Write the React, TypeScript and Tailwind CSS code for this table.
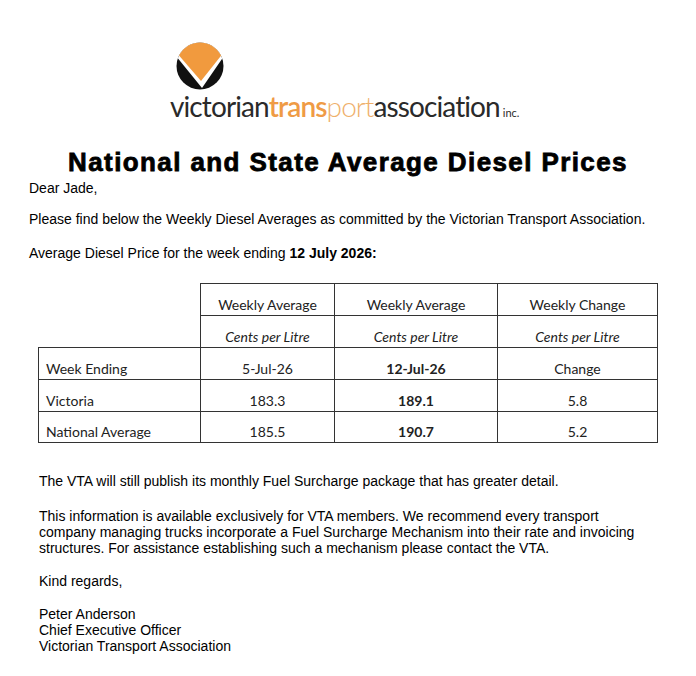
import React from 'react';

function VtaMark() {
  return (
    <svg width="48" height="48" viewBox="0 0 48 48">
      <defs>
        <clipPath id="vta-circle">
          <circle cx="24" cy="24" r="23.5" />
        </clipPath>
      </defs>
      <circle cx="24" cy="24" r="23.5" fill="#111111" />
      <g clipPath="url(#vta-circle)">
        <polygon points="0,0 48,0 48,14 26,46 0,14" fill="#ffffff" />
        <polygon points="0,0 48,0 48,10 25,39 0,10" fill="#f19a3e" />
      </g>
    </svg>
  );
}

const rows = [
  { label: 'Week Ending', prev: '5-Jul-26', cur: '12-Jul-26', change: 'Change' },
  { label: 'Victoria', prev: '183.3', cur: '189.1', change: '5.8' },
  { label: 'National Average', prev: '185.5', cur: '190.7', change: '5.2' },
];

const cell = 'border-l border-t border-[#333] h-[32px] flex items-end pb-[2px] leading-[16px]';

export default function App() {
  return (
    <div className="w-[696px] h-[676px] bg-white text-black font-['Liberation_Sans',Arial,sans-serif] overflow-hidden">
      {/* Logo */}
      <div className="pt-[42px] pl-[170px]">
        <div className="pl-[6px]">
          <VtaMark />
        </div>
        <div className="mt-[1px] flex items-baseline font-['Lato',sans-serif] text-[28px] leading-[30px] tracking-[-0.9px] text-[#2a2a2a]">
          <span>victorian</span>
          <span className="text-[#ef9b45] font-semibold">trans</span>
          <span className="text-[#efb06b] font-light">port</span>
          <span>association</span>
          <span className="ml-[3px] text-[11px] tracking-normal">inc.</span>
        </div>
      </div>

      {/* Title */}
      <h1 className="mt-[20px] text-center text-[26px] leading-[28px] font-bold tracking-[1.4px] [-webkit-text-stroke:0.8px_black]">
        National and State Average Diesel Prices
      </h1>

      <div className="pl-[29px] text-[14px] leading-[16px]">
        <p className="mt-[4px]">Dear Jade,</p>
        <p className="mt-[15px]">
          Please find below the Weekly Diesel Averages as committed by the Victorian Transport Association.
        </p>
        <p className="mt-[18px]">
          Average Diesel Price for the week ending <b>12 July 2026:</b>
        </p>
      </div>

      {/* Table */}
      <div className="mt-[22px] ml-[38px] w-[620px] font-['Lato',sans-serif] text-[14px] text-[#222]">
        <div className="grid grid-cols-[162px_134px_163px_161px]">
          <div />
          <div className={`${cell} justify-center`}>Weekly Average</div>
          <div className={`${cell} justify-center`}>Weekly Average</div>
          <div className={`${cell} border-r justify-center`}>Weekly Change</div>
          <div />
          <div className={`${cell} justify-center italic`}>Cents per Litre</div>
          <div className={`${cell} justify-center italic`}>Cents per Litre</div>
          <div className={`${cell} border-r justify-center italic`}>Cents per Litre</div>
          {rows.map((r, i) => {
            const last = i === rows.length - 1 ? 'border-b' : '';
            return (
              <React.Fragment key={r.label}>
                <div className={`${cell} pl-[7px] ${last}`}>{r.label}</div>
                <div className={`${cell} justify-center ${last}`}>{r.prev}</div>
                <div className={`${cell} justify-center font-bold ${last}`}>{r.cur}</div>
                <div className={`${cell} border-r justify-center ${last}`}>{r.change}</div>
              </React.Fragment>
            );
          })}
        </div>
      </div>

      <div className="pl-[39px] pr-[20px] mt-[30px] text-[14px] leading-[16px]">
        <p>The VTA will still publish its monthly Fuel Surcharge package that has greater detail.</p>
        <p className="mt-[19px]">
          This information is available exclusively for VTA members. We recommend every transport
          <br />
          company managing trucks incorporate a Fuel Surcharge Mechanism into their rate and invoicing
          <br />
          structures. For assistance establishing such a mechanism please contact the VTA.
        </p>
        <p className="mt-[17px]">Kind regards,</p>
        <p className="mt-[17px]">
          Peter Anderson
          <br />
          Chief Executive Officer
          <br />
          Victorian Transport Association
        </p>
      </div>
    </div>
  );
}
